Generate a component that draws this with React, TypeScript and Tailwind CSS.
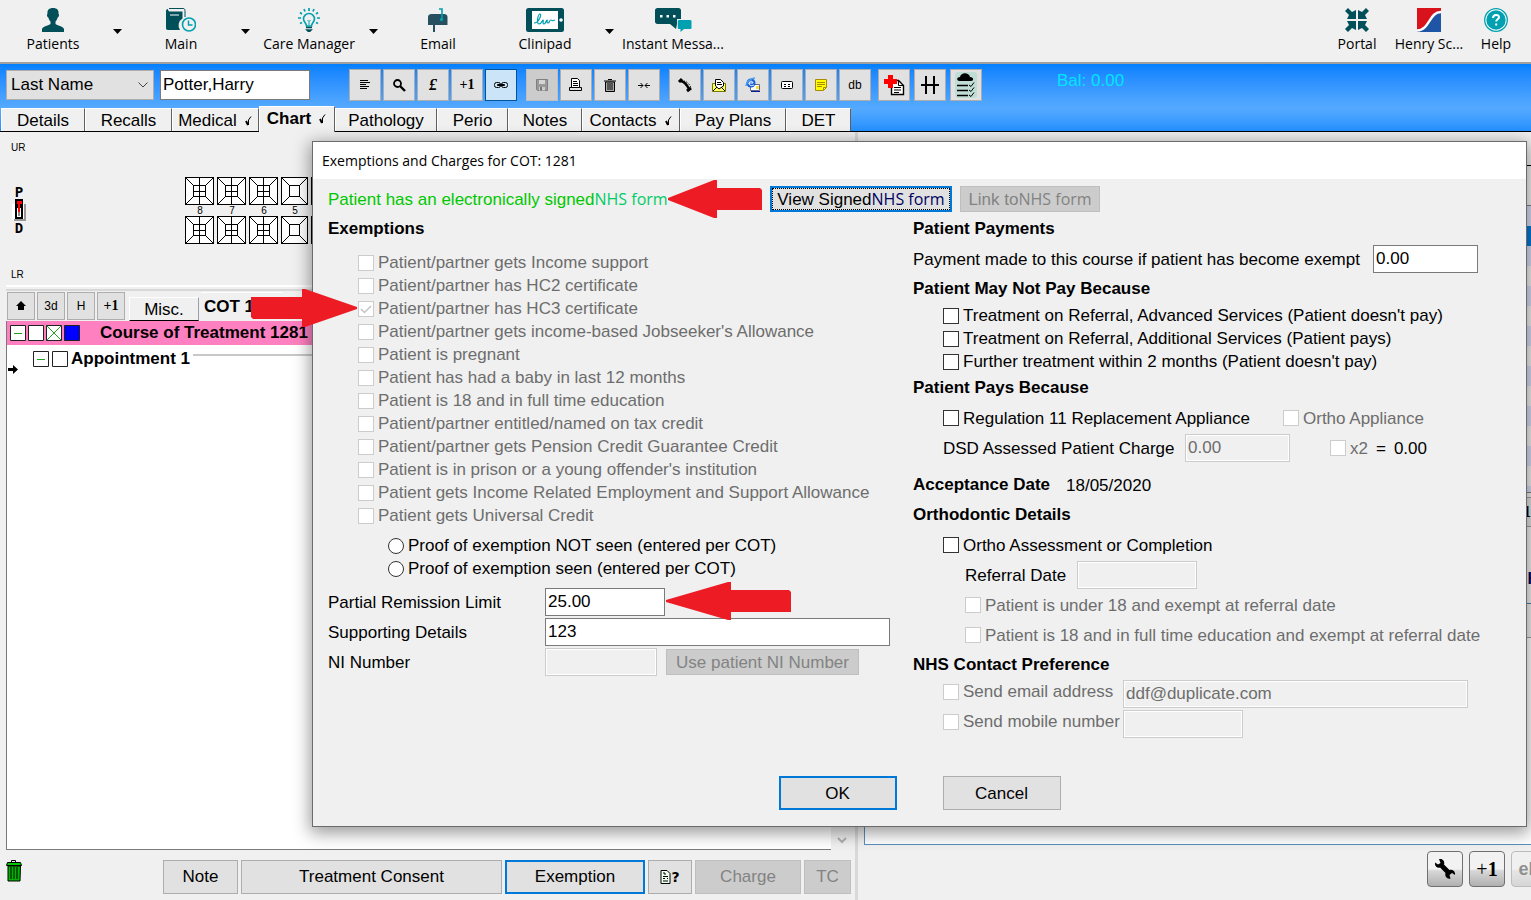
import React from 'react';

const NAVY = '#004f59';
const TEAL = '#00a0b0';

/* ---------- top navigation ---------- */

const PatientsIcon = () => (
  <svg width="24" height="24" viewBox="0 0 24 24" fill={NAVY}>
    <path d="M12 0c4 0 6 2 5.500 6 1 0 .5 3-.8 3.500C16 12 15 13 14.500 13.500V16c1.500 1.500 7.500 2 8.500 5v3H1v-3c1-3 7-3.500 8.500-5v-2.500C9 13 8 12 7.300 9.500 6 9 5.500 6 6.500 6 6 2 8 0 12 0z" />
  </svg>
);

const MainIcon = () => (
  <svg width="30" height="24" viewBox="0 0 30 24" fill="none">
    <path d="M3 .5h14c1.500 0 2 1 2 2V9" stroke={NAVY} />
    <path d="M0 3c0-1 .5-2 2-2 0 2 1 2.500 2 2.500h12.500v7a8 8 0 0 0-2.500 11.500H2c-1.500 0-2-1-2-2z" fill={NAVY} />
    <path d="M4 7h9" stroke="#fff" />
    <circle cx="23" cy="16.500" r="6.500" stroke={TEAL} strokeWidth="1.600" fill="#f0f0f0" />
    <path d="M22.500 12.500v4.500h4" stroke={TEAL} strokeWidth="1.500" />
  </svg>
);

const BulbIcon = () => (
  <svg width="24" height="24" viewBox="0 0 24 24" fill="none">
    <path d="M9.500 18c0-3-3-4-3-7a5.500 5.500 0 0 1 11 0c0 3-3 4-3 7z" stroke={TEAL} strokeWidth="1.600" />
    <path d="M10.500 12l1.500 1.500 1.500-1.500M12 13.500V17" stroke={TEAL} />
    <path d="M12 0v3M7 1l1 2.500M17 1l-1 2.500M3 4.500l2 1.500M21 4.500l-2 1.500M1 10h3M20 10h3M3 15.500l2-1M21 15.500l-2-1" stroke={TEAL} strokeWidth="1.700" />
    <path d="M9 19.500h6M10 22h4l-2 2z" stroke={NAVY} strokeWidth="1.600" />
  </svg>
);

const MailboxIcon = () => (
  <svg width="20" height="24" viewBox="0 0 20 24">
    <path d="M0 9c0-2 1.500-3 3.500-3H16c2 0 3.500 1 3.500 3v8H0z" fill="#26505f" />
    <path d="M5 17h2v7H5z" fill="#26505f" />
    <path d="M11 1h3v10" stroke={TEAL} strokeWidth="1.600" fill="none" />
    <circle cx="13.500" cy="11.500" r="1.700" fill={TEAL} />
  </svg>
);

const ClinipadIcon = () => (
  <svg width="38" height="24" viewBox="0 0 38 24">
    <rect width="38" height="24" rx="2.500" fill={NAVY} />
    <path d="M6 3h26v18H6z" fill="#fff" />
    <circle cx="35" cy="12" r="1.800" fill="#fff" />
    <path d="M8 15c5 0 8-9 6-9s-4 10-1 10 3-4 4-4-1 4 1 4 2-4 3-4-1 3 1 3 1-3 3-3 0 2 4 0" stroke={TEAL} strokeWidth="1.200" fill="none" />
  </svg>
);

const MessageIcon = () => (
  <svg width="37" height="24" viewBox="0 0 37 24">
    <path d="M2.500 0h21c1.500 0 2.500 1 2.500 2.500V11h-4v5l-1 5-6-5H2.500C1 16 0 15 0 13.500v-11C0 1 1 0 2.500 0z" fill={NAVY} />
    <path d="M24 12h11c1 0 1.500.5 1.500 1.500v6c0 1-.5 1.500-1.500 1.500h-6l-3.500 3v-3H24c-.7 0-1.200-.5-1.200-1.500v-6c0-1 .5-1.500 1.200-1.500z" fill={TEAL} />
    <path d="M5 7h2.500v2.500H5zM11.500 7H14v2.500h-2.500zM18 7h2.500v2.500H18z" fill="#fff" />
  </svg>
);

const PortalIcon = () => (
  <svg width="24" height="24" viewBox="0 0 24 24" fill={NAVY}>
    {[0, 90, 180, 270].map((deg) => (
      <path key={deg} transform={`rotate(${deg} 12 12)`} d="M0 3l3-3 4 4 4-2v9H2l2-4z" />
    ))}
  </svg>
);

const HenryIcon = () => (
  <svg width="24" height="24" viewBox="0 0 24 24">
    <path d="M0 0h24v24H0z" fill="#1f55a5" />
    <path d="M0 0h24v4C12 4 12 21 0 22z" fill="#d8131b" />
    <path d="M24 4C12 4 13 22 0 22.500" stroke="#fff" strokeWidth="2.400" fill="none" />
  </svg>
);

const HelpIcon = () => (
  <svg width="24" height="24" viewBox="0 0 24 24" fill="none">
    <circle cx="12" cy="12" r="11.300" fill="#fff" stroke={TEAL} strokeWidth="1.300" />
    <circle cx="12" cy="12" r="9.700" fill={TEAL} />
    <path d="M9 10c0-4 6-4 6-.8 0 2-2.800 2-2.800 4.300M12.200 15.500v2" stroke="#fff" strokeWidth="2" />
  </svg>
);

const Caret = () => (
  <svg width="9" height="5" viewBox="0 0 9 5" className="shrink-0">
    <path d="M0 0h9L4.500 5z" />
  </svg>
);

interface NavItemProps {
  label: string;
  icon: React.ReactNode;
  caret?: boolean;
  className?: string;
}

const NavItem: React.FC<NavItemProps> = ({ label, icon, caret, className = 'w-[106px]' }) => (
  <div className="flex shrink-0 items-center">
    <button className={`flex flex-col items-center gap-0.5 whitespace-nowrap ${className}`}>
      {icon}
      <span className="font-['Open_Sans',sans-serif] text-sm leading-5">{label}</span>
    </button>
    {caret && (
      <button aria-label={`${label} menu`} className="flex w-[22px] justify-center">
        <Caret />
      </button>
    )}
  </div>
);

/* ---------- toolbar ---------- */

const Glyph: React.FC<{ children: React.ReactNode; size?: number }> = ({ children, size = 16 }) => (
  <svg width={size} height={size} viewBox={`0 0 ${size} ${size}`} fill="none" stroke="#000">
    {children}
  </svg>
);

const LinesIcon = () => (
  <Glyph><path d="M3 3.500h8M3 5.500h10M3 7.500h6M3 9.500h9M3 11.500h7" /></Glyph>
);
const SearchIcon = () => (
  <Glyph><circle cx="6.500" cy="6.500" r="3.500" strokeWidth="1.800" /><path d="M9 9l5 5" strokeWidth="2.400" /></Glyph>
);
const LinkIcon = () => (
  <Glyph><rect x="1.500" y="5.500" width="6" height="5" rx="2" /><rect x="8.500" y="5.500" width="6" height="5" rx="2" /><path d="M4.500 7.500h7v1h-7z" /></Glyph>
);
const SaveIcon = () => (
  <Glyph><path d="M2.500 2.500h11v11h-10l-1-1z" fill="#999" stroke="#808080" /><path d="M5 3h6v4H5z" fill="#d5d5d5" stroke="none" /><path d="M5 10h6v3.500H5z" fill="#ccc" stroke="none" /><path d="M6 10h2v3.500H6z" fill="#777" stroke="none" /></Glyph>
);
const PrintIcon = () => (
  <Glyph><path d="M3.500 1.500h6l2 2v7h-8z" fill="#fff" /><path d="M5 4.500h4M5 6.500h5M5 8.500h5M1.500 13.500v-3h2M11.500 10.500h2v3h-12" /></Glyph>
);
const BinIcon = () => (
  <Glyph><path d="M3.500 5h9v9.500h-9z" fill="#aaa" /><path d="M2 4h12M6 2.500h4M6 6v7M8 6v7M10 6v7" /></Glyph>
);
const MergeIcon = () => (
  <Glyph>
    <path d="M2 8.500h5M9 8.500h5" shapeRendering="crispEdges" />
    <path d="M4.500 6L7 8.500 4.500 11M11.500 6L9 8.500l2.500 2.500" />
  </Glyph>
);
const PhoneIcon = () => (
  <Glyph>
    <path d="M2 5l3-3M10 14l4-3" strokeWidth="3" />
    <path d="M4 4c4 1 6 4 8 8" strokeWidth="2.500" />
    <path d="M7 4c4 1 6 4 7 7" strokeDasharray="1 1" />
  </Glyph>
);
const LetterIcon = () => (
  <Glyph><path d="M1.500 6.500h13v8h-13z" fill="#ff6" stroke="#770" /><path d="M4.500 9V2.500h5l3 3V9L8 12z" fill="#fff" /><path d="M6 5.500h4M6 7.500h5M2 14l4-4M14 14l-4-4" /></Glyph>
);
const WebMailIcon = () => (
  <Glyph>
    <path d="M5.500 7.500h9v6h-9z" fill="#fff" stroke="#668" />
    <path d="M11 9h3v3h-3z" fill="#fd3" stroke="none" />
    <circle cx="6" cy="6" r="4.500" fill="#1560d8" stroke="none" />
    <path d="M4 6.500c0-3 4-3 4-.5H4c0 3 3 3 5 2" stroke="#fff" />
    <path d="M1 9c0-4 5-8 9-8" stroke="#4aa0f0" strokeWidth="1.500" />
    <path d="M6 14.500h9" stroke="#029" />
  </Glyph>
);
const CardIcon = () => (
  <Glyph><rect x="2.500" y="4.500" width="11" height="7" rx="1" fill="#fff" /><path d="M5 7.500h2M9 7.500h2M5 9.500h2M9 9.500h2" /></Glyph>
);
const StickyIcon = () => (
  <Glyph><path d="M2.500 2.500h11v8l-3 3h-8z" fill="#ff0" stroke="#aa8a00" /><path d="M4 5.500h8M4 7.500h8M4 9.500h5M10.500 13v-2.500h3" stroke="#aa8a00" /></Glyph>
);
const MedicalNoteIcon = () => (
  <Glyph size={24}><path d="M9.500 7.500h7l5 5v9h-12z" fill="#fff" strokeWidth="1.400" /><path d="M16.500 7.500v5h5M12 14.500h7M12 17h7M12 19.500h5" /><path d="M6 2h5v4h4v5h-4v4H6v-4H2V6h4z" fill="red" stroke="none" /></Glyph>
);
const GridIcon = () => (
  <Glyph size={24}><path d="M8 3v18M16 3v18" strokeWidth="2" /><path d="M3 12h18" strokeWidth="2" /></Glyph>
);
const CloudListIcon = () => (
  <svg width="24" height="26" viewBox="0 0 24 26">
    <rect x="1" width="22" height="26" rx="3" fill="#bfdcd5" />
    <path d="M5 9c-3-1-2-4 1-4 1-5 9-5 10 0 4 0 4 4 1 4z" />
    <path d="M3 13.500h11M3 18.500h11M3 23.500h11" stroke="#000" strokeWidth="1.600" />
    <path d="M15 13l2 1.500 3-4M15 18l2 1.500 3-4M15 23l2 1.500 3-4" stroke="#000" fill="none" />
  </svg>
);

const PlusOne = () => <span className="font-['Liberation_Serif',serif] text-sm font-bold">+1</span>;

const toolGroups = [
  [
    { name: 'List', icon: <LinesIcon /> },
    { name: 'Search', icon: <SearchIcon /> },
    { name: 'Fees', icon: <span className="font-['Liberation_Serif',serif] text-base font-bold italic">£</span> },
    { name: 'Add one', icon: <PlusOne /> },
    { name: 'Link', icon: <LinkIcon />, active: true },
  ],
  [
    { name: 'Save', icon: <SaveIcon />, disabled: true },
    { name: 'Print', icon: <PrintIcon /> },
    { name: 'Delete', icon: <BinIcon /> },
    { name: 'Merge', icon: <MergeIcon /> },
  ],
  [
    { name: 'Phone', icon: <PhoneIcon /> },
    { name: 'Letter', icon: <LetterIcon /> },
    { name: 'Web mail', icon: <WebMailIcon /> },
    { name: 'Card', icon: <CardIcon /> },
    { name: 'Sticky note', icon: <StickyIcon /> },
    { name: 'Database', icon: <span className="text-xs">db</span> },
  ],
];

const wideTools = [
  { name: 'Medical note', icon: <MedicalNoteIcon /> },
  { name: 'Grid', icon: <GridIcon /> },
  { name: 'Cloud list', icon: <CloudListIcon /> },
];

interface ToolButtonProps {
  name: string;
  icon: React.ReactNode;
  active?: boolean;
  disabled?: boolean;
}

const ToolButton: React.FC<ToolButtonProps> = ({ name, icon, active, disabled }) => {
  let look = 'border-[#adadad] bg-[#e1e1e1]';
  if (active) look = 'border-[#005499] bg-[#cce4f7]';
  if (disabled) look = 'border-[#bfbfbf] bg-[#cccccc]';
  return (
    <button aria-label={name} disabled={disabled} className={`flex size-8 items-center justify-center border ${look}`}>
      {icon}
    </button>
  );
};

const Tick = () => (
  <svg width="8" height="10" viewBox="0 0 8 10" fill="none" stroke="#000">
    <path d="M1 5l2 4" strokeWidth="2" />
    <path d="M3.500 9V4L6 .5" />
  </svg>
);

const tabs = [
  { label: 'Details', width: 'w-[84px]' },
  { label: 'Recalls', width: 'w-[87px]' },
  { label: 'Medical', width: 'w-[87px]', tick: true },
  { label: 'Chart', width: 'w-[76px]', tick: true, active: true },
  { label: 'Pathology', width: 'w-[102px]' },
  { label: 'Perio', width: 'w-[71px]' },
  { label: 'Notes', width: 'w-[74px]' },
  { label: 'Contacts', width: 'w-[98px]', tick: true },
  { label: 'Pay Plans', width: 'w-[106px]' },
  { label: 'DET', width: 'w-[65px]' },
];

/* ---------- chart pane ---------- */

const Tooth: React.FC<{ molar: boolean }> = ({ molar }) => (
  <svg width={molar ? 30 : 28} height="29" viewBox={molar ? '0 0 30 29' : '0 0 28 29'} fill="none" stroke="#000" shapeRendering="crispEdges">
    {molar ? (
      <>
        <path d="M.5.5h28v27H.5z" fill="#fff" />
        <path d="M.5.500L8.500 8.500M28.500.5L20.500 8.500M.5 27.500l8-8M28.500 27.500l-8-8M8.500 8.500h12v11h-12z" />
        <path d="M14.500.5v27M8.500 14.500h12" />
      </>
    ) : (
      <>
        <path d="M.5.5h26v27H.5z" fill="#fff" />
        <path d="M.5.500L8.500 8.500M26.500.5L18.500 8.500M.5 27.500l8-8M26.500 27.500l-8-8M8.500 8.500h10v11h-10z" />
      </>
    )}
  </svg>
);

const RotateTool = () => (
  <svg width="14" height="22" viewBox="0 0 14 22">
    <path d="M0 5h12v16H0z" fill="#fff" />
    <path d="M12 5h2v17H2v-2h10z" fill="#999" />
    <path d="M3 0h8v8H3zM3 8h8v12H3z" />
    <path d="M5 9h4v9H5z" fill="#fff" />
    <path d="M5 2h5v3H8v8H6V5H5z" fill="red" />
    <path d="M6 13h2v4H6z" fill="#888" />
  </svg>
);

const TreeBox: React.FC<{ mark?: 'minus' | 'cross' | 'fill' }> = ({ mark }) => (
  <svg width="16" height="16" viewBox="0 0 16 16" fill="none" stroke="#20a020">
    <path d="M.5.5h15v15H.5z" fill={mark === 'fill' ? '#0000ff' : '#fff'} stroke="#222" />
    {mark === 'minus' && <path d="M4 8.500h8" />}
    {mark === 'cross' && <path d="M1 1l14 14M15 1L1 15" />}
  </svg>
);

const chartButton = 'flex size-[28px] items-center justify-center border border-[#adadad] bg-[#e1e1e1] text-xs';

const GreenBin = () => (
  <svg width="16" height="22" viewBox="0 0 16 22">
    <path d="M5.500 2.500V.5h4v2" fill="none" stroke="#000" />
    <path d="M1.500 2.500h13l1 3H.5z" fill="#00c800" stroke="#000" />
    <path d="M2 6h12.500l-.5 15H2z" fill="#00b400" stroke="#000" />
    <path d="M5 7v12M8 7v12M11 7v12" stroke="#003c00" strokeWidth="1.500" />
  </svg>
);

const ChartPane = () => (
  <section className="flex w-[855px] shrink-0 flex-col pr-[3px]">
    <div className="flex h-[153px] text-[10px]">
      <div className="flex w-[185px] flex-col justify-between pt-2 pl-[11px]">
        <span>UR</span>
        <div className="flex w-4 flex-col items-center font-['DejaVu_Sans_Mono',monospace] text-sm leading-[14px] font-bold">
          <span>P</span>
          <RotateTool />
          <span>D</span>
        </div>
        <span className="leading-5">LR</span>
      </div>
      <div className="flex gap-0.5 pt-[45px]">
        {[8, 7, 6, 5, 4, 3].map((n) => (
          <div key={n} className="flex flex-col items-center">
            <Tooth molar={n > 5} />
            <span className="leading-[10px]">{n}</span>
            <Tooth molar={n > 5} />
          </div>
        ))}
      </div>
    </div>
    <div className="ml-1.5 h-1.5 border-t-2 border-b-2 border-t-white border-b-[#d8d8d8]" />
    <div className="flex h-[30px] items-start gap-0.5 pt-px pl-[7px]">
      <button aria-label="Up" className={chartButton}>
        <svg width="10" height="10" viewBox="0 0 10 10"><path d="M5 0l5 5H8v4H2V5H0z" /></svg>
      </button>
      <button className={chartButton}>3d</button>
      <button className={chartButton}>H</button>
      <button className={chartButton}><PlusOne /></button>
      <button className="ml-0.5 h-6 w-[70px] self-end border border-white border-r-gray-400 border-b-black text-[17px] leading-6">Misc.</button>
      <button className="h-7 border-t border-white pl-[3px] text-[17px] leading-7 font-bold">COT 1281</button>
    </div>
    <div className="flex flex-1 pl-1.5 text-[17px] font-bold">
      <div className="flex-1 border-b border-l border-[#7a7a7a] bg-white">
        <div className="flex h-6 items-center gap-0.5 bg-[#ff80c0] pl-[3px]">
          <TreeBox mark="minus" />
          <TreeBox />
          <TreeBox mark="cross" />
          <TreeBox mark="fill" />
          <span className="ml-[18px] leading-6">Course of Treatment 1281</span>
        </div>
        <div className="flex h-7 items-center gap-[3px] pl-[26px]">
          <TreeBox mark="minus" />
          <TreeBox />
          <span>Appointment 1</span>
          <span className="mb-2 h-0.5 flex-1 bg-[#c8c8c8]" />
        </div>
        <svg width="10" height="9" viewBox="0 0 10 9" className="-mt-2 ml-px"><path d="M0 3h5V0l5 4.500L5 9V6H0z" /></svg>
      </div>
      <div className="flex w-[21px] items-end justify-center bg-[#f0f0f0] pb-1.5">
        <svg width="10" height="7" viewBox="0 0 10 7" fill="none" stroke="#b0b0b0" strokeWidth="2"><path d="M1 1l4 4 4-4" /></svg>
      </div>
    </div>
    <div className="flex h-[50px] items-start gap-[3px] pt-[10px] pr-px pl-1.5 text-[17px]">
      <button aria-label="Delete item" className="mr-auto"><GreenBin /></button>
      <PushButton className="h-[34px] w-[75px]">Note</PushButton>
      <PushButton className="h-[34px] w-[261px]">Treatment Consent</PushButton>
      <PushButton primary className="h-[34px] w-[140px]">Exemption</PushButton>
      <PushButton label="Form help" className="flex h-[34px] w-[44px] items-center justify-center">
        <svg width="11" height="14" viewBox="0 0 11 14" fill="none" stroke="#000"><path d="M1 .5h6l3 3v10H1z" fill="#efe" /><path d="M3 3h2v2M3 6.500h5M3 8.500h2M7 8.500h1M3 11h5" /></svg>
        <span className="font-['DejaVu_Sans',sans-serif] text-sm font-bold">?</span>
      </PushButton>
      <PushButton disabled className="h-[34px] w-[106px]">Charge</PushButton>
      <PushButton disabled className="h-[34px] w-[47px]">TC</PushButton>
    </div>
  </section>
);

const roundButton = 'flex size-9 shrink-0 items-center justify-center rounded border border-[#707070] bg-linear-to-b from-[#f2f2f2] from-50% via-[#d8d8d8] via-55% to-[#b0b0b0]';

const RecordsPane = () => (
  <section className="flex min-w-0 flex-1 flex-col border-l-3 border-[#d8d8d8] pl-1.5">
    <div className="h-[34px] border-b border-black" />
    <div className="h-10 border-b border-[#808080]" />
    <div className="border-b border-[#808080]">
      {Array.from({ length: 14 }, (_, i) => (
        <div key={i} className={`h-5 ${i === 1 ? 'bg-[#0078d7]' : i % 2 ? 'bg-[#f0f0f0]' : 'bg-[#d5ddf5]'}`} />
      ))}
      <div className="h-1.5 bg-[#d5ddf5]" />
    </div>
    <div className="flex h-[111px] flex-col items-end justify-between border-b border-[#4a80b0] pt-1 pb-3 text-base font-bold">
      <span className="border-y border-[#a0a0a0] bg-[#e1e1e1] font-['Liberation_Serif',serif] leading-7">1</span>
      <span className="-mr-2 text-[#000050]">H</span>
    </div>
    <div className="h-[34px] border-b border-[#a0a0a0]" />
    <div className="flex-1 border-b border-l border-[#5a8fbf] bg-white" />
    <div className="-mr-4 flex h-[55px] items-start justify-end gap-1.5 pt-1.5">
      <button aria-label="Settings" className={roundButton}>
        <svg width="20" height="20" viewBox="0 0 20 20">
          <path d="M4 0c4-1 6 3 5 5.500l5.500 5.500c3-1 6 1 5.500 5l-3-2-2.500 2 1 3.500c-4 1-6-2.500-5-5.500L5 8.500C2 9.500-.5 7 0 3.500l3 2L5.500 4z" />
        </svg>
      </button>
      <button className={`${roundButton} font-['Liberation_Serif',serif] text-xl`}>+<b>1</b></button>
      <button disabled className={`${roundButton} text-lg font-bold opacity-40`}>eb</button>
    </div>
  </section>
);

/* ---------- dialog ---------- */

interface PushButtonProps {
  children: React.ReactNode;
  className: string;
  label?: string;
  primary?: boolean;
  disabled?: boolean;
}

const PushButton: React.FC<PushButtonProps> = ({ children, className, label, primary, disabled }) => {
  let look = 'border border-[#adadad] bg-[#e1e1e1]';
  if (primary) look = 'border-2 border-[#0078d7] bg-[#e1e1e1]';
  if (disabled) look = 'border border-[#bfbfbf] bg-[#cccccc] text-[#838383]';
  return (
    <button aria-label={label} disabled={disabled} className={`shrink-0 whitespace-nowrap ${look} ${className}`}>
      {children}
    </button>
  );
};

interface CheckProps {
  label: string;
  checked?: boolean;
  disabled?: boolean;
  className?: string;
}

const Check: React.FC<CheckProps> = ({ label, checked, disabled, className = 'h-[23px]' }) => (
  <label className={`flex items-center gap-1 whitespace-nowrap ${disabled ? 'text-[#6d6d6d]' : ''} ${className}`}>
    <span className="relative size-4 shrink-0">
      <input
        type="checkbox"
        defaultChecked={checked}
        disabled={disabled}
        className="block size-4 appearance-none border border-[#333333] bg-white disabled:border-[#cccccc]"
      />
      {checked && (
        <svg viewBox="0 0 16 16" className="pointer-events-none absolute inset-0" fill="none" stroke="#c4c4c4" strokeWidth="1.500">
          <path d="M3 8l3.500 3.500L13 5" />
        </svg>
      )}
    </span>
    {label}
  </label>
);

const Radio: React.FC<{ label: string }> = ({ label }) => (
  <label className="flex h-[23px] items-center gap-1">
    <input type="radio" name="proof" className="size-4 appearance-none rounded-full border border-[#333333] bg-white checked:border-5" />
    {label}
  </label>
);

interface TextBoxProps {
  id: string;
  label?: string;
  value?: string;
  disabled?: boolean;
  className: string;
}

const TextBox: React.FC<TextBoxProps> = ({ id, label, value, disabled, className }) => (
  <input
    id={id}
    aria-label={label}
    defaultValue={value}
    disabled={disabled}
    className={`h-7 shrink-0 border border-[#7a7a7a] bg-white px-0.5 disabled:border-[#cccccc] disabled:bg-[#f0f0f0] disabled:text-[#6d6d6d] disabled:inset-ring disabled:inset-ring-white ${className}`}
  />
);

const RedArrow: React.FC<{ width: number; head: number; className?: string }> = ({ width, head, className = '' }) => (
  <svg width={width} height="38" viewBox={`0 0 ${width} 38`} className={`shrink-0 ${className}`} fill="#ed1c24">
    <path d={`M1 18L${head - 3} 0h3v8H${width - 2}l2 2v20H${head}v8h-3L1 20z`} />
  </svg>
);

const Heading: React.FC<{ children: React.ReactNode }> = ({ children }) => (
  <h2 className="text-[17px] leading-[30px] font-bold">{children}</h2>
);

const exemptions = [
  'Patient/partner gets Income support',
  'Patient/partner has HC2 certificate',
  'Patient/partner has HC3 certificate',
  "Patient/partner gets income-based Jobseeker's Allowance",
  'Patient is pregnant',
  'Patient has had a baby in last 12 months',
  'Patient is 18 and in full time education',
  'Patient/partner entitled/named on tax credit',
  'Patient/partner gets Pension Credit Guarantee Credit',
  "Patient is in prison or a young offender's institution",
  'Patient gets Income Related Employment and Support Allowance',
  'Patient gets Universal Credit',
];

const mayNotPay = [
  "Treatment on Referral, Advanced Services (Patient doesn't pay)",
  'Treatment on Referral, Additional Services (Patient pays)',
  "Further treatment within 2 months (Patient doesn't pay)",
];

const ExemptionsColumn = () => (
  <div className="w-[585px] shrink-0">
    <Heading>Exemptions</Heading>
    <div className="mt-[7px] pl-[30px]">
      {exemptions.map((label) => (
        <Check key={label} label={label} disabled checked={label.includes('HC3')} />
      ))}
    </div>
    <div className="mt-[7px] pl-[60px]">
      <Radio label="Proof of exemption NOT seen (entered per COT)" />
      <Radio label="Proof of exemption seen (entered per COT)" />
    </div>
    <div className="mt-2 grid grid-cols-[217px_1fr] items-center gap-y-0.5">
      <label htmlFor="remission">Partial Remission Limit</label>
      <div className="relative flex">
        <TextBox id="remission" value="25.00" className="w-[120px]" />
        <RedArrow width={126} head={66} className="absolute -top-1.5 left-[120px]" />
      </div>
      <label htmlFor="supporting">Supporting Details</label>
      <TextBox id="supporting" value="123" className="w-[345px]" />
      <label htmlFor="ni">NI Number</label>
      <div className="flex items-center gap-[9px]">
        <TextBox id="ni" disabled className="w-[112px]" />
        <PushButton disabled className="h-[26px] w-[193px]">Use patient NI Number</PushButton>
      </div>
    </div>
  </div>
);

const PaymentsColumn = () => (
  <div className="min-w-0 flex-1">
    <Heading>Patient Payments</Heading>
    <div className="flex h-[30px] items-center">
      <label htmlFor="payment" className="w-[460px] whitespace-nowrap">Payment made to this course if patient has become exempt</label>
      <TextBox id="payment" value="0.00" className="w-[105px]" />
    </div>
    <Heading>Patient May Not Pay Because</Heading>
    <div className="pl-[30px]">
      {mayNotPay.map((label) => <Check key={label} label={label} />)}
    </div>
    <Heading>Patient Pays Because</Heading>
    <div className="flex pl-[30px]">
      <Check label="Regulation 11 Replacement Appliance" className="h-[30px] w-[340px]" />
      <Check label="Ortho Appliance" disabled className="h-[30px]" />
    </div>
    <div className="flex h-[30px] items-center pl-[30px]">
      <label htmlFor="dsd" className="w-[242px]">DSD Assessed Patient Charge</label>
      <TextBox id="dsd" value="0.00" disabled className="w-[105px]" />
      <Check label="x2" disabled className="ml-10 h-[30px]" />
      <span className="ml-2">=</span>
      <span className="ml-2">0.00</span>
    </div>
    <div className="mt-[7px] flex items-center gap-4">
      <Heading>Acceptance Date</Heading>
      <span>18/05/2020</span>
    </div>
    <Heading>Orthodontic Details</Heading>
    <Check label="Ortho Assessment or Completion" className="ml-[30px] h-[30px]" />
    <div className="flex h-[30px] items-center pl-[52px]">
      <label htmlFor="referral" className="w-[112px]">Referral Date</label>
      <TextBox id="referral" disabled className="w-[120px]" />
    </div>
    <Check label="Patient is under 18 and exempt at referral date" disabled className="ml-[52px] h-[30px]" />
    <Check label="Patient is 18 and in full time education and exempt at referral date" disabled className="ml-[52px] h-[30px]" />
    <Heading>NHS Contact Preference</Heading>
    <div className="flex h-[30px] items-start pl-[30px]">
      <Check label="Send email address" disabled className="h-[23px] w-[180px]" />
      <TextBox id="email" label="Email address" value="ddf@duplicate.com" disabled className="w-[345px]" />
    </div>
    <div className="flex h-[30px] items-start pl-[30px]">
      <Check label="Send mobile number" disabled className="h-[23px] w-[180px]" />
      <TextBox id="mobile" label="Mobile number" disabled className="w-[120px]" />
    </div>
  </div>
);

const NhsForm: React.FC<{ className?: string }> = ({ className = '' }) => (
  <span className={`font-['Open_Sans',sans-serif] text-base ${className}`}>NHS form</span>
);

const ExemptionsDialog = () => (
  <div
    role="dialog"
    aria-label="Exemptions and Charges"
    className="absolute top-[141px] right-1 left-[312px] border border-[#6b6b6b] bg-[#f0f0f0] text-[17px] leading-[23px] shadow-[0_4px_16px_2px_rgba(0,0,0,0.4)]"
  >
    <h1 className="bg-white pl-[9px] font-['Open_Sans',sans-serif] text-sm leading-[37px]">Exemptions and Charges for COT: 1281</h1>
    <div className="pl-[15px]">
      <div className="flex h-[35px] items-center pt-[5px]">
        <p className="flex w-[339px] items-center whitespace-nowrap text-[#00c800]">
          Patient has an electronically signed
          <NhsForm className="text-[#00cc66]" />
        </p>
        <RedArrow width={95} head={50} className="mr-2" />
        <PushButton primary className="mr-2 flex h-[26px] w-[182px] items-center justify-center outline-1 -outline-offset-3 outline-dotted outline-black">
          View Signed<NhsForm className="text-[#000060]" />
        </PushButton>
        <PushButton disabled className="flex h-[26px] w-[140px] items-center justify-center">
          Link to<NhsForm />
        </PushButton>
      </div>
      <div className="flex">
        <ExemptionsColumn />
        <PaymentsColumn />
      </div>
    </div>
    <div className="mt-9 mb-4 flex justify-center gap-[46px]">
      <PushButton primary className="h-[34px] w-[118px]">OK</PushButton>
      <PushButton className="h-[34px] w-[118px]">Cancel</PushButton>
    </div>
  </div>
);

const App: React.FC = () => {
  return (
    <div className="relative flex min-h-screen flex-col overflow-hidden bg-[#f0f0f0] font-['Liberation_Sans',Arial,sans-serif] text-black">
      <nav className="flex h-16 items-start justify-between overflow-hidden border-b-2 border-[#a0a0a0] pt-2">
        <div className="flex">
          <NavItem label="Patients" icon={<PatientsIcon />} caret />
          <NavItem label="Main" icon={<MainIcon />} caret />
          <NavItem label="Care Manager" icon={<BulbIcon />} caret />
          <NavItem label="Email" icon={<MailboxIcon />} className="w-[108px]" />
          <NavItem label="Clinipad" icon={<ClinipadIcon />} caret />
          <NavItem label="Instant Messa..." icon={<MessageIcon />} />
        </div>
        <div className="-mr-[18px] flex">
          <NavItem label="Portal" icon={<PortalIcon />} className="w-[72px]" />
          <NavItem label="Henry Sc..." icon={<HenryIcon />} className="w-[72px]" />
          <NavItem label="Help" icon={<HelpIcon />} className="w-[62px]" caret />
        </div>
      </nav>

      <header className="flex flex-col bg-linear-to-b from-[#0080ff] via-[#55aaff] via-65% to-[#1f8fff]">
        <div className="flex h-[42px] items-center pl-1.5 text-[17px]">
          <div className="relative mr-1.5">
            <select aria-label="Search by" className="h-[30px] w-[148px] appearance-none border border-[#adadad] bg-[#e1e1e1] px-1">
              <option>Last Name</option>
            </select>
            <svg width="10" height="6" viewBox="0 0 10 6" className="pointer-events-none absolute top-3 right-1.5" fill="none" stroke="#444">
              <path d="M.5.500L5 5 9.500.5" />
            </svg>
          </div>
          <input aria-label="Patient" defaultValue="Potter,Harry" className="mr-[39px] h-[30px] w-[150px] border border-[#7a7a7a] bg-white px-0.5" />
          <div className="flex gap-[9px]">
            {toolGroups.map((group, i) => (
              <div key={i} className="flex gap-0.5">
                {group.map((tool) => <ToolButton key={tool.name} {...tool} />)}
              </div>
            ))}
          </div>
          <div className="ml-[7px] flex gap-1">
            {wideTools.map((tool) => <ToolButton key={tool.name} {...tool} />)}
          </div>
          <span className="ml-[75px] pb-2 text-[#00e5ff]">Bal: 0.00</span>
        </div>
        <div className="flex h-[26px] items-end border-b border-black pl-px text-[17px]">
          {tabs.map((tab) => (
            <button
              key={tab.label}
              className={`flex items-center justify-center gap-2 border-t border-r border-l border-t-white border-r-[#606060] border-l-white bg-[#f0f0f0] ${tab.width} ${tab.active ? '-mb-px h-[26px] pb-0.5 font-bold' : 'h-[23px] pt-0.5'}`}
            >
              {tab.label}
              {tab.tick && <Tick />}
            </button>
          ))}
        </div>
      </header>

      <main className="flex flex-1">
        <ChartPane />
        <RecordsPane />
      </main>

      <ExemptionsDialog />
      <RedArrow width={107} head={56} className="absolute top-[289px] left-[251px] rotate-180" />
    </div>
  );
};

export default App;
